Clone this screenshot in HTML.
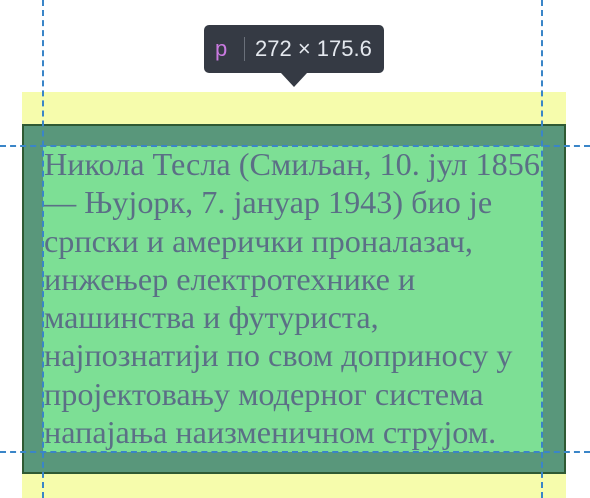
<!DOCTYPE html>
<html><head><meta charset="utf-8"><style>
html,body{margin:0;padding:0;background:#fff;width:590px;height:498px;overflow:hidden;position:relative}
.y{position:absolute;left:22px;top:92px;width:544px;height:406px;background:#f6fcac}
.b{position:absolute;left:22px;top:124px;width:540px;height:346px;border:2px solid #2f5a33;background:#59977b}
.c{position:absolute;left:43px;top:146px;width:500px;height:306px;background:#7ddf95}
.t{position:absolute;left:44px;top:145px;font-family:"Liberation Serif",serif;font-size:32.2px;line-height:38.3px;color:#5b6f86;white-space:nowrap}
.v{position:absolute;top:0;height:498px;border-left:2px dashed #3a85c8;width:0}
.h{position:absolute;left:0;width:590px;border-top:2px dashed #3a85c8;height:0}
.tip{position:absolute;left:204px;top:25px;width:180px;height:48px;background:#353a44;border-radius:5px;font-family:"Liberation Sans",sans-serif;font-size:22px;color:#e4e8ee;line-height:48px}
.tip .p{position:absolute;left:11px;color:#c97ae0}
.tip .s{position:absolute;left:40px;top:12px;height:24px;border-left:1px solid #6a707a}
.tip .d{position:absolute;left:51px}
.ar{position:absolute;left:281px;top:73px;width:0;height:0;border-left:13px solid transparent;border-right:13px solid transparent;border-top:14px solid #353a44}
</style></head><body>
<div class="y"></div>
<div class="b"></div>
<div class="c"></div>
<div class="t">Никола Тесла (Смиљан, 10. јул 1856<br>— Њујорк, 7. јануар 1943) био је<br>српски и амерички проналазач,<br>инжењер електротехнике и<br>машинства и футуриста,<br>најпознатији по свом доприносу у<br>пројектовању модерног система<br>напајања наизменичном струјом.</div>
<div class="v" style="left:42px"></div>
<div class="v" style="left:541px"></div>
<div class="h" style="top:145px"></div>
<div class="h" style="top:451px"></div>
<div class="tip"><span class="p">p</span><span class="s"></span><span class="d">272 × 175.6</span></div>
<div class="ar"></div>
</body></html>
